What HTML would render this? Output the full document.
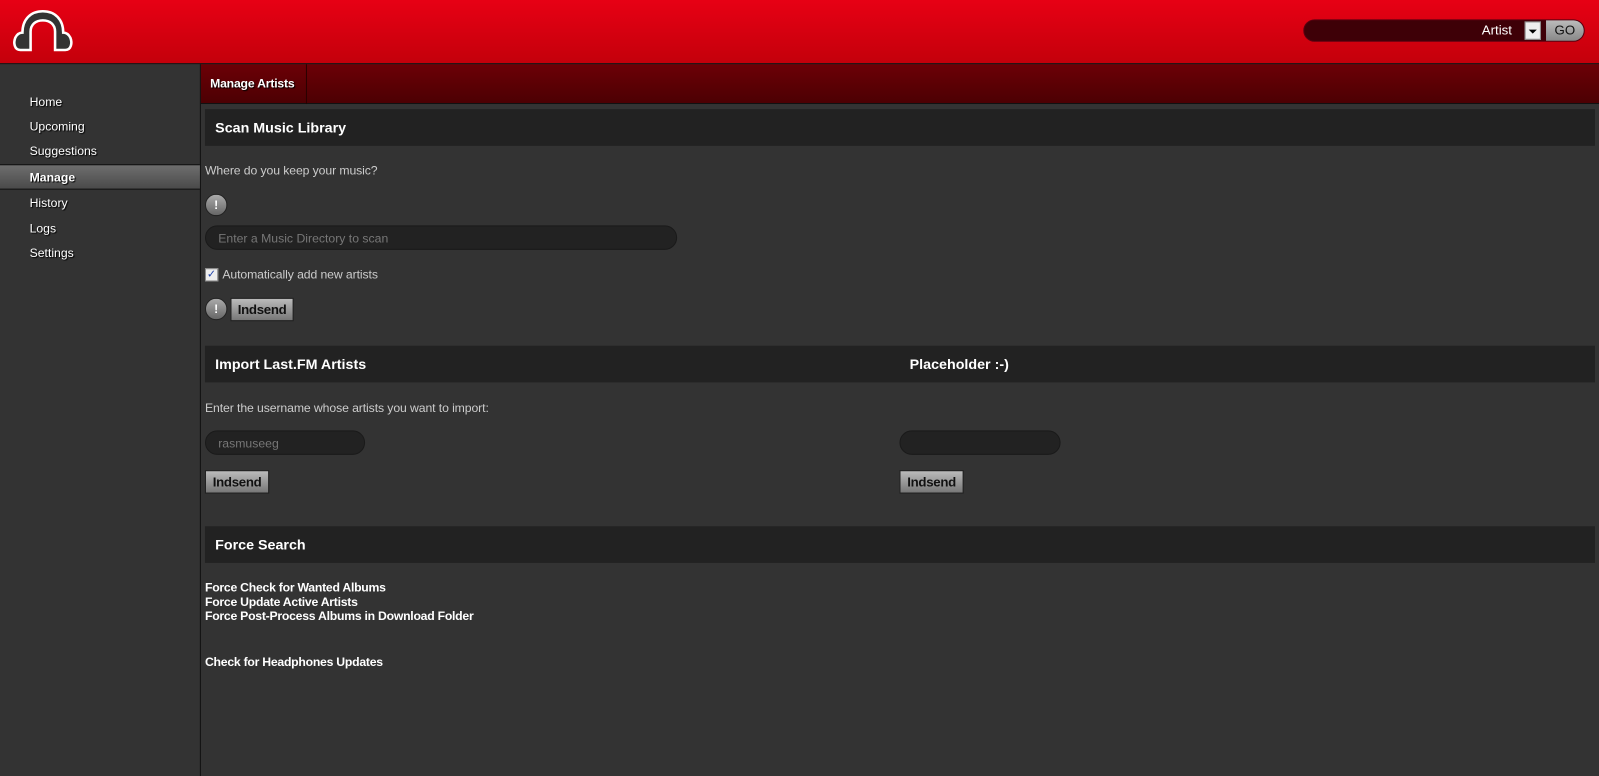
<!DOCTYPE html>
<html><head><style>
*{margin:0;padding:0;box-sizing:border-box}
body{width:1599px;height:776px;background:#333;font-family:"Liberation Sans",Arial,sans-serif;font-size:12px;color:#ccc;overflow:hidden}
#w{position:relative;width:1568px;height:761px;transform:scale(1.0198);transform-origin:0 0}
.hdr{position:absolute;left:0;top:0;width:1568px;height:63px;background:linear-gradient(#e70014,#c4000b);border-bottom:1px solid #111}
.side{position:absolute;left:0;top:63px;width:197px;height:698px;background:#333;border-right:1px solid #111}
.side a{position:absolute;left:29px;color:#fff;text-decoration:none;font-size:12px;text-shadow:1px 1px 1px #000}
.sel{position:absolute;left:0;top:98px;width:196px;height:25px;background:linear-gradient(#6e6e6e,#4a4a4a);border-top:1px solid #111;border-bottom:1px solid #111}
.sub{position:absolute;left:197px;top:63px;width:1371px;height:39px;background:linear-gradient(#6c0006,#4c0003);border-bottom:1px solid #111}
.tab{position:absolute;left:0;top:0;height:39px;width:104px;border-right:1px solid #2a0000;color:#fff;font-weight:bold;font-size:12px;padding:12px 0 0 9px;text-shadow:1px 1px 1px #000;letter-spacing:-0.2px}
.sh{position:absolute;left:201px;width:1363px;height:36px;background:#222;color:#fff;font-weight:bold;font-size:14px;padding:10px 0 0 10px}
.t{position:absolute;color:#ccc;font-size:12px;letter-spacing:-0.1px}
.inp{position:absolute;height:24px;border-radius:12px;background:#222;border:1px solid #1a1a1a;color:#777;font-size:12px;padding:5px 0 0 12px}
.btn{position:absolute;height:23px;background:linear-gradient(#bbb,#777);border:1px solid #222;color:#111;font-weight:bold;font-size:13px;text-align:center;line-height:21px;letter-spacing:-0.3px}
.ex{position:absolute;width:22px;height:22px;border-radius:50%;background:linear-gradient(#aaa,#666);border:1px solid #222;color:#fff;font-weight:bold;text-align:center;line-height:20px;font-size:12px}
.lk{position:absolute;left:201px;color:#fff;font-weight:bold;font-size:12px;letter-spacing:-0.25px}
</style></head><body><div id="w">
<div class="hdr">
<svg style="position:absolute;left:12px;top:9px" width="60" height="44" viewBox="0 0 60 44">
<path d="M8 40 C2 40 1 33 3 28 C5 24 8 23 10 23 C10 10 18 2 30 2 C42 2 50 10 50 23 C52 23 55 24 57 28 C59 33 58 40 52 40 L42 40 L42 22 C42 15 37 11 30 11 C23 11 18 15 18 22 L18 40 Z" fill="#333" stroke="#fff" stroke-width="2.5"/>
</svg>
<div style="position:absolute;left:1278px;top:19px;width:276px;height:22px;border-radius:11px;background:#3e0007;border:1px solid #5a0010"></div>
<div style="position:absolute;left:1453px;top:22px;color:#fff;font-size:13px">Artist</div>
<div style="position:absolute;left:1495px;top:21px;width:16px;height:18px;background:#eee;border:1px solid #888"><div style="margin:7px auto 0;width:0;height:0;border-left:4px solid transparent;border-right:4px solid transparent;border-top:4px solid #000"></div></div>
<div style="position:absolute;left:1516px;top:20px;width:37px;height:20px;background:linear-gradient(#bbb,#888);border-radius:0 10px 10px 0;color:#111;font-size:13px;text-align:center;line-height:20px">GO</div>
</div>
<div class="side">
<div class="sel"></div>
<a style="top:30px">Home</a><a style="top:54px">Upcoming</a><a style="top:78px">Suggestions</a>
<a style="top:104px;font-weight:bold">Manage</a><a style="top:129px">History</a><a style="top:154px">Logs</a><a style="top:178px">Settings</a>
</div>
<div class="sub"><div class="tab">Manage Artists</div></div>
<div class="sh" style="top:107px">Scan Music Library</div>
<div class="t" style="left:201px;top:160px">Where do you keep your music?</div>
<div class="ex" style="left:201px;top:190px">!</div>
<div class="inp" style="left:201px;top:221px;width:463px">Enter a Music Directory to scan</div>
<div style="position:absolute;left:201px;top:263px;width:13px;height:13px;background:#eee;border:1px solid #888;color:#2244aa;font-size:11px;line-height:11px;text-align:center">✓</div>
<div class="t" style="left:218px;top:262px">Automatically add new artists</div>
<div class="ex" style="left:201px;top:292px">!</div>
<div class="btn" style="left:226px;top:292px;width:62px">Indsend</div>
<div class="sh" style="top:339px">Import Last.FM Artists<span style="position:absolute;left:691px;top:10px">Placeholder :-)</span></div>
<div class="t" style="left:201px;top:393px">Enter the username whose artists you want to import:</div>
<div class="inp" style="left:201px;top:422px;width:157px">rasmuseeg</div>
<div class="inp" style="left:882px;top:422px;width:158px"></div>
<div class="btn" style="left:201px;top:461px;width:63px">Indsend</div>
<div class="btn" style="left:882px;top:461px;width:63px">Indsend</div>
<div class="sh" style="top:516px">Force Search</div>
<div class="lk" style="top:569px">Force Check for Wanted Albums</div>
<div class="lk" style="top:583px">Force Update Active Artists</div>
<div class="lk" style="top:597px">Force Post-Process Albums in Download Folder</div>
<div class="lk" style="top:642px">Check for Headphones Updates</div>
</div></body></html>
